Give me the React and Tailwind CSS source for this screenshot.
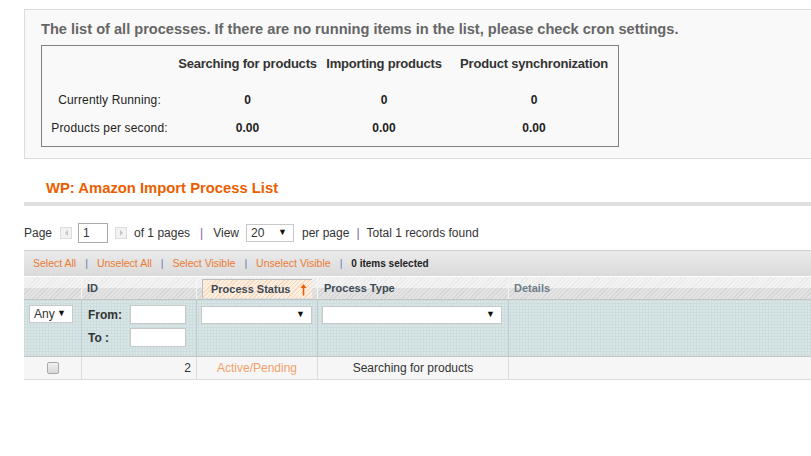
import React from 'react';

const stats = [
  { label: 'Currently Running:', values: ['0', '0', '0'] },
  { label: 'Products per second:', values: ['0.00', '0.00', '0.00'] },
];

function FakeSelect({ value = '', className = '' }) {
  return (
    <div className={`flex items-center justify-between bg-white border border-[#c8c8c8] text-[12px] text-[#333] pl-[4px] pr-[6px] ${className}`}>
      <span>{value}</span>
      <span className="text-[9px] text-[#111]">▼</span>
    </div>
  );
}

function PagerArrow({ dir }) {
  return (
    <span className="w-[12px] h-[12px] border border-[#dcdcdc] bg-[#f2f2f2] flex items-center justify-center">
      <span
        className={`w-0 h-0 border-y-[3px] border-y-transparent ${dir === 'left' ? 'border-r-[3px] border-r-[#c4c4c4]' : 'border-l-[3px] border-l-[#c4c4c4]'}`}
      />
    </span>
  );
}

const headerBg =
  '[background-image:linear-gradient(to_bottom,rgba(255,255,255,0.35)_0,rgba(255,255,255,0.35)_50%,rgba(0,0,0,0.04)_50%),repeating-linear-gradient(135deg,#dedede_0px,#dedede_1px,#ececec_1px,#ececec_3px)]';
const sortedBg =
  '[background-image:repeating-linear-gradient(135deg,#f6d9bd_0px,#f6d9bd_1px,#fdf0e3_1px,#fdf0e3_3px)]';
const filterBg =
  'bg-[#d9e6e7] [background-image:linear-gradient(#cddcdd_1px,transparent_1px),linear-gradient(90deg,#cddcdd_1px,transparent_1px)] [background-size:3px_3px]';

export default function App() {
  return (
    <div className="w-[811px] h-[456px] overflow-hidden bg-white font-['Liberation_Sans',Arial,sans-serif] text-[#333]">
      <div className="pl-[24px] w-[830px]">
        {/* status box */}
        <div className="mt-[9px] h-[150px] border border-[#dcdcdc] bg-[#f9f9f9] pl-[16px] pt-[10px]">
          <div className="text-[14.6px] leading-[18px] font-bold text-[#666] whitespace-nowrap">
            The list of all processes. If there are no running items in the list, please check cron settings.
          </div>
          <div className="mt-[7px] w-[578px] border border-[#808080] pb-[4px]">
            <div className="grid grid-cols-[135px_141px_132px_1fr] h-[34px] pt-[1px] items-center text-[13px] font-bold text-[#333] text-center whitespace-nowrap tracking-[-0.2px]">
              <span />
              <span>Searching for products</span>
              <span>Importing products</span>
              <span>Product synchronization</span>
            </div>
            <div className="h-[6px]" />
            {stats.map(row => (
              <div key={row.label} className="grid grid-cols-[135px_141px_132px_1fr] h-[28px] items-center text-[12px] text-center text-[#222]">
                <span className="tracking-[0.15px]">{row.label}</span>
                {row.values.map((v, i) => (
                  <span key={i} className="font-bold">{v}</span>
                ))}
              </div>
            ))}
          </div>
        </div>

        {/* section heading */}
        <div className="mt-[20px] pl-[22px] text-[14.8px] leading-[18px] font-bold text-[#eb5e00]">
          WP: Amazon Import Process List
        </div>
        <div className="mt-[5px] h-[4px] bg-[#dedede]" />

        {/* pager */}
        <div className="mt-[17px] h-[20px] flex items-center text-[12px] text-[#333]">
          <span>Page</span>
          <span className="ml-[8px]"><PagerArrow dir="left" /></span>
          <span className="ml-[6px] w-[30px] h-[20px] border border-[#aaa] bg-white pl-[4px] leading-[18px]">1</span>
          <span className="ml-[7px]"><PagerArrow dir="right" /></span>
          <span className="ml-[7px]">of 1 pages</span>
          <span className="mx-[10px] text-[#7a5ca8]">|</span>
          <span>View</span>
          <FakeSelect value="20" className="ml-[7px] w-[48px] h-[18px] border-[#aaa]" />
          <span className="ml-[8px]">per page</span>
          <span className="mx-[7px] text-[#7a5ca8]">|</span>
          <span>Total 1 records found</span>
        </div>

        {/* massaction */}
        <div className="mt-[7px] h-[26px] border-t border-[#cfcfcf] bg-gradient-to-b from-[#ebebeb] to-[#dadada] flex items-center pl-[9px] text-[10.5px]">
          <span className="text-[#eb7a32]">Select All</span>
          <span className="mx-[9px] text-[#5a7cb8]">|</span>
          <span className="text-[#eb7a32]">Unselect All</span>
          <span className="mx-[9px] text-[#5a7cb8]">|</span>
          <span className="text-[#eb7a32]">Select Visible</span>
          <span className="mx-[9px] text-[#5a7cb8]">|</span>
          <span className="text-[#eb7a32]">Unselect Visible</span>
          <span className="mx-[9px] text-[#5a7cb8]">|</span>
          <span className="font-bold text-[10px] text-[#222]">0 items selected</span>
        </div>

        {/* grid */}
        <div className="mt-[1px] text-[11px]">
          <div className={`grid grid-cols-[58px_115px_121px_191px_1fr] h-[23px] border-b border-[#c4c4c4] ${headerBg}`}>
            <div className="border-r border-[#f5f5f5]" />
            <div className="border-r border-[#f5f5f5] pl-[5px] flex items-center font-bold text-[#3c4a55]">ID</div>
            <div className="border-r border-[#f5f5f5] px-[5px] pt-[2px] pb-[1px]">
              <div className={`h-full border-l border-t border-[#bcbcbc] ${sortedBg} flex items-center justify-between pl-[8px] pr-[5px] font-bold text-[#3c4a55]`}>
                <span>Process Status</span>
                <svg width="7" height="13" viewBox="0 0 7 13" className="text-[#eb5e00]">
                  <path d="M3.5 1 L0.5 5 H2.7 V12.5 H4.3 V5 H6.5 Z" fill="currentColor" />
                </svg>
              </div>
            </div>
            <div className="border-r border-[#f5f5f5] pl-[6px] flex items-center font-bold text-[#3c4a55]">Process Type</div>
            <div className="pl-[5px] flex items-center font-bold text-[#6f7f8a]">Details</div>
          </div>

          <div className={`grid grid-cols-[58px_115px_121px_191px_1fr] h-[57px] border-b border-[#c4c4c4] ${filterBg}`}>
            <div className="border-r border-[#bfcbcc] pl-[5px] pt-[5px]">
              <FakeSelect value="Any" className="w-[44px] h-[18px]" />
            </div>
            <div className="border-r border-[#bfcbcc] pl-[6px] pt-[5px] text-[12px] font-bold text-[#333]">
              <div className="flex items-center h-[19px]">
                <span className="w-[42px]">From:</span>
                <span className="w-[56px] h-[19px] bg-white border border-[#c8c8c8]" />
              </div>
              <div className="flex items-center h-[19px] mt-[4px]">
                <span className="w-[42px]">To :</span>
                <span className="w-[56px] h-[19px] bg-white border border-[#c8c8c8]" />
              </div>
            </div>
            <div className="border-r border-[#bfcbcc] pl-[4px] pt-[6px]">
              <FakeSelect className="w-[111px] h-[18px]" />
            </div>
            <div className="border-r border-[#bfcbcc] pl-[4px] pt-[6px]">
              <FakeSelect className="w-[180px] h-[18px]" />
            </div>
            <div />
          </div>

          <div className="grid grid-cols-[58px_115px_121px_191px_1fr] h-[23px] border-b border-[#dcdcdc] bg-[#f6f6f6] text-[12px]">
            <div className="border-r border-[#dcdcdc] flex items-center justify-center">
              <span className="w-[12px] h-[12px] rounded-[2px] border border-[#a8a8a8] bg-gradient-to-b from-[#f2f2f2] to-[#d8d8d8]" />
            </div>
            <div className="border-r border-[#dcdcdc] flex items-center justify-end pr-[5px] text-[#333]">2</div>
            <div className="border-r border-[#dcdcdc] flex items-center justify-center text-[#f5a06a]">Active/Pending</div>
            <div className="border-r border-[#dcdcdc] flex items-center justify-center text-[#333]">Searching for products</div>
            <div />
          </div>
        </div>
      </div>
    </div>
  );
}
